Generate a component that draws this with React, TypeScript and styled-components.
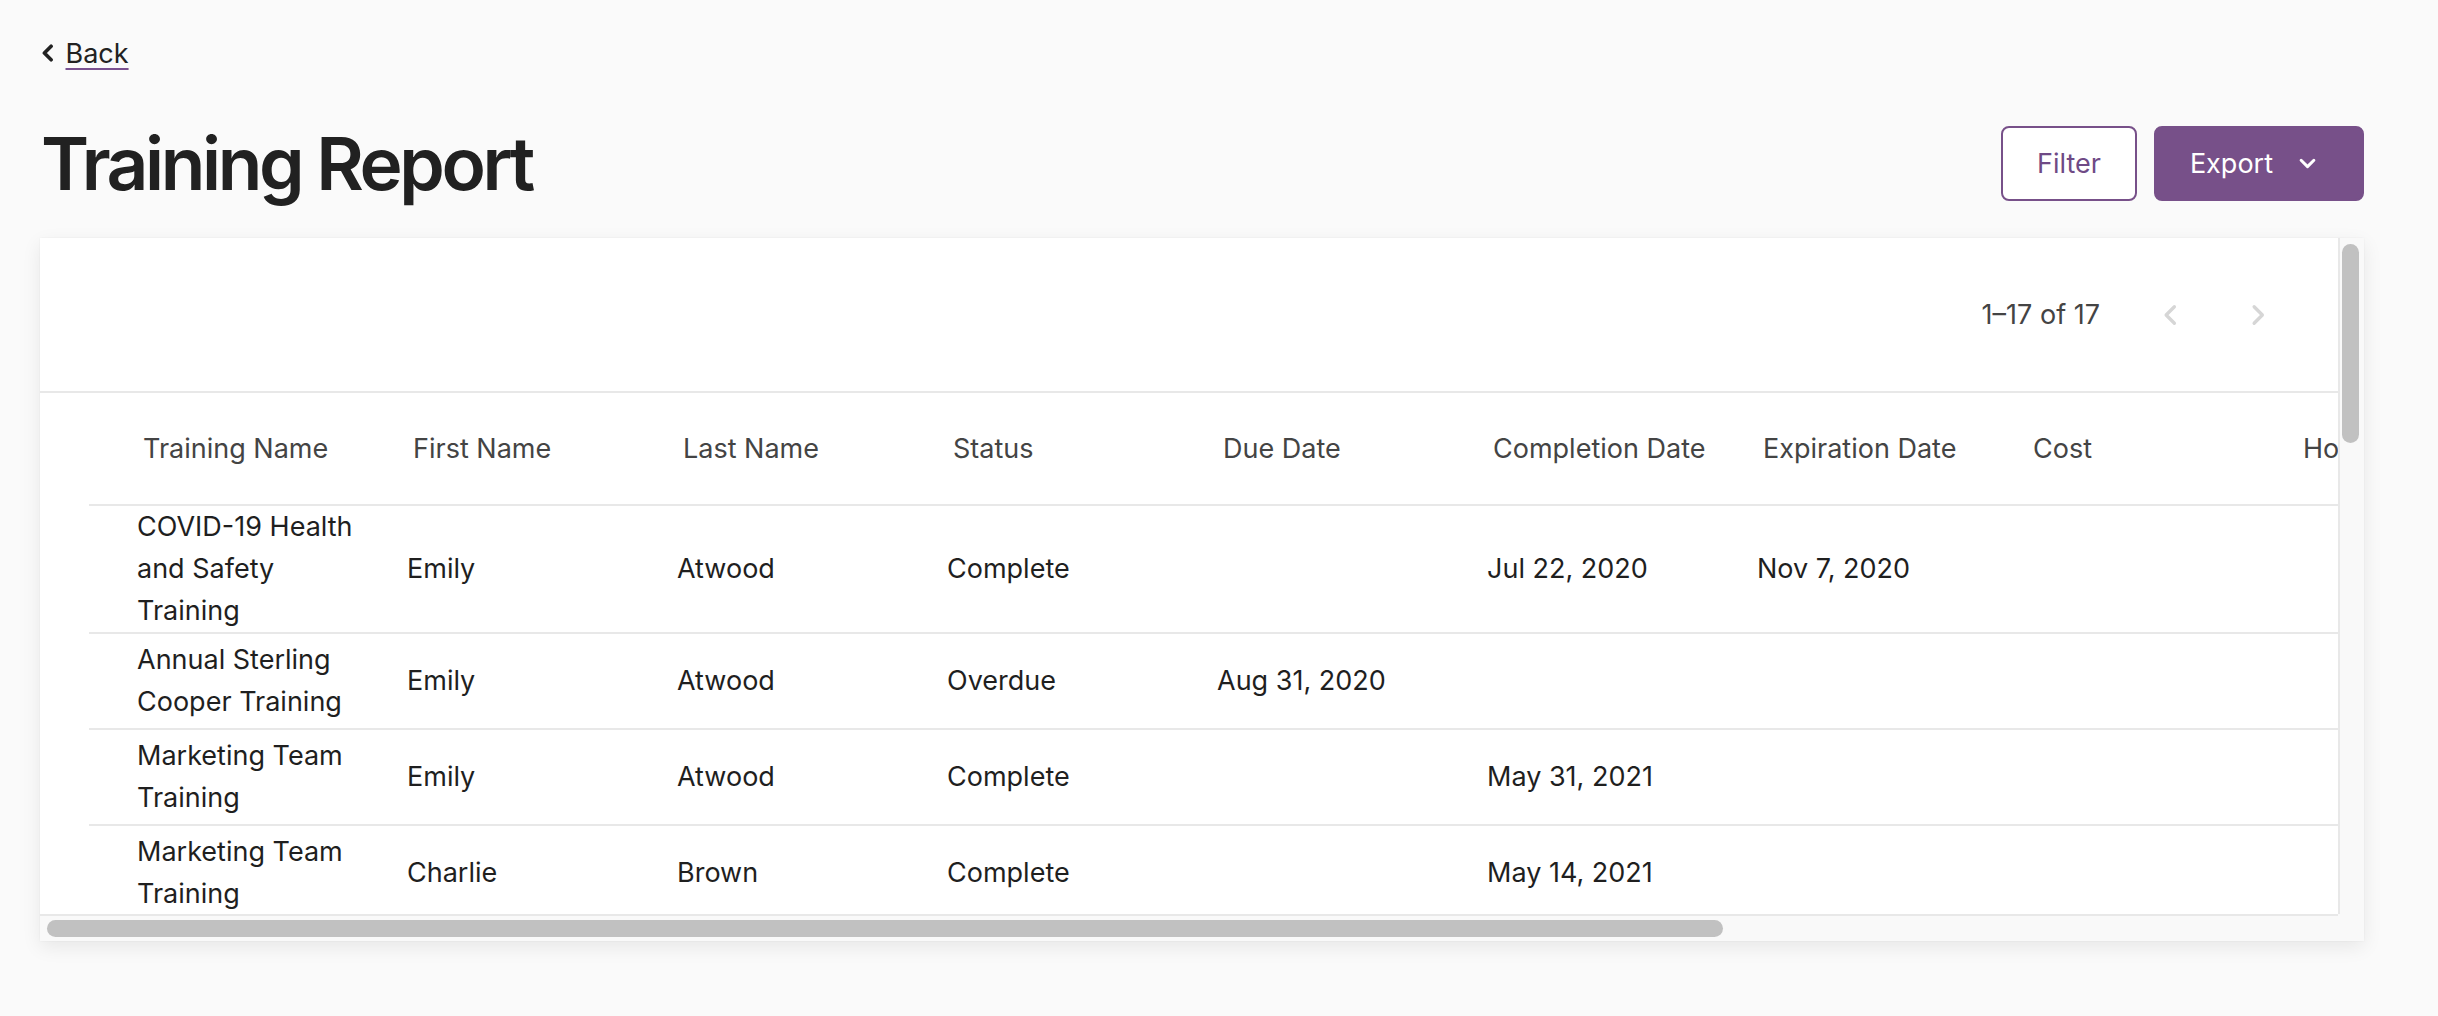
import * as React from 'react'
import styled, { createGlobalStyle } from 'styled-components'

const GlobalStyle = createGlobalStyle`
  body {
    margin: 0;
    background: #fafafa;
    font-family: Inter, "Open Sans", "Liberation Sans", sans-serif;
    color: #1f1f1f;
  }
`

const Page = styled.div`
  padding: 36px 74px 40px 40px;
`
const BackLink = styled.a`
  display: inline-flex;
  align-items: center;
  gap: 11px;
  height: 34px;
  margin-left: 1px;
  color: #222;
  cursor: pointer;
`
const BackText = styled.span`
  font-size: 27px;
  text-decoration: underline;
  text-decoration-color: #7a5190;
  text-decoration-thickness: 2px;
  text-underline-offset: 5px;
`
const Header = styled.div`
  display: flex;
  align-items: center;
  justify-content: space-between;
  height: 75px;
  margin-top: 56px;
`
const Title = styled.h1`
  margin: 0 0 0 1px;
  font-size: 73px;
  font-weight: 600;
  letter-spacing: -3.4px;
  color: #212121;
`
const Actions = styled.div`
  display: flex;
  gap: 17px;
`
const Button = styled.button<{ $primary?: boolean }>`
  display: flex;
  align-items: center;
  gap: 26px;
  height: 75px;
  padding: ${(p) => (p.$primary ? '0 46px 0 34px' : '0 34px')};
  border: 2px solid #775089;
  border-radius: 8px;
  background: ${(p) => (p.$primary ? '#775089' : '#ffffff')};
  color: ${(p) => (p.$primary ? '#ffffff' : '#6f4a86')};
  font-family: inherit;
  font-size: 27px;
  cursor: pointer;
`
const Card = styled.div`
  display: grid;
  grid-template-columns: 1fr 26px;
  grid-template-rows: 676px 27px;
  margin-top: 37px;
  width: 2324px;
  background: #fff;
  box-shadow: 0 6px 18px rgba(0, 0, 0, 0.08), 0 0 2px rgba(0, 0, 0, 0.05);
`
const Viewport = styled.div`
  overflow: hidden;
  min-width: 0;
`
const Track = styled.div<{ $axis: 'x' | 'y' }>`
  display: flex;
  background: #f9f9f9;
  ${(p) => (p.$axis === 'y'
    ? 'border-left: 2px solid #e8e8e8; padding: 6px 0 0 2px;'
    : 'border-top: 2px solid #e8e8e8; padding: 4px 0 0 7px;')}
`
const Thumb = styled.div<{ $axis: 'x' | 'y' }>`
  background: #c1c1c1;
  border-radius: 9px;
  width: ${(p) => (p.$axis === 'y' ? '17px' : '1676px')};
  height: ${(p) => (p.$axis === 'y' ? '199px' : '17px')};
`
const Corner = styled.div`
  background: #f9f9f9;
`
const Pagination = styled.div`
  display: flex;
  align-items: center;
  justify-content: flex-end;
  height: 153px;
  padding-right: 50px;
  border-bottom: 2px solid #e8e8e8;
`
const PageCount = styled.span`
  font-size: 27px;
  color: #444;
  margin-right: 40px;
`
const PageButton = styled.button`
  display: flex;
  align-items: center;
  justify-content: center;
  width: 60px;
  height: 60px;
  padding: 0;
  border: 0;
  background: transparent;
  cursor: default;

  & + & {
    margin-left: 28px;
  }
`
const Table = styled.div`
  width: max-content;
  margin: 0 48px 0 49px;
`
const Row = styled.div<{ $head?: boolean }>`
  display: grid;
  grid-template-columns: repeat(11, 270px);
  align-items: center;
  min-height: ${(p) => (p.$head ? '111px' : '94px')};
  padding-left: 48px;
  border-bottom: 2px solid #e8e8e8;
`
const HeadCell = styled.div`
  padding: 0 30px 0 6px;
  font-size: 27px;
  color: #444;
  white-space: nowrap;
`
const Cell = styled.div`
  padding-right: 30px;
  font-size: 27px;
  line-height: 42px;
  color: #1f1f1f;
`

const columns = [
  'Training Name',
  'First Name',
  'Last Name',
  'Status',
  'Due Date',
  'Completion Date',
  'Expiration Date',
  'Cost',
  'Hours',
]

const rows: string[][] = [
  ['COVID-19 Health and Safety Training', 'Emily', 'Atwood', 'Complete', '', 'Jul 22, 2020', 'Nov 7, 2020'],
  ['Annual Sterling Cooper Training', 'Emily', 'Atwood', 'Overdue', 'Aug 31, 2020', '', ''],
  ['Marketing Team Training', 'Emily', 'Atwood', 'Complete', '', 'May 31, 2021', ''],
  ['Marketing Team Training', 'Charlie', 'Brown', 'Complete', '', 'May 14, 2021', ''],
]

const Chevron = ({ dir, color, size, weight }: { dir: 'left' | 'right' | 'down'; color: string; size: number; weight: number }) => {
  const d = dir === 'left' ? 'M9 2 L3 8 L9 14' : dir === 'right' ? 'M3 2 L9 8 L3 14' : 'M2 4 L8 10 L14 4'
  const box = dir === 'down' ? '0 0 16 14' : '0 0 12 16'
  return (
    <svg width={dir === 'down' ? size : size * 0.75} height={dir === 'down' ? size * 0.875 : size} viewBox={box}>
      <path d={d} fill='none' stroke={color} strokeWidth={weight} strokeLinecap='round' strokeLinejoin='round' />
    </svg>
  )
}

export default function App() {
  return (
    <Page>
      <GlobalStyle />
      <BackLink>
        <Chevron dir='left' color='#222' size={18} weight={3.2} />
        <BackText>Back</BackText>
      </BackLink>

      <Header>
        <Title>Training Report</Title>
        <Actions>
          <Button>Filter</Button>
          <Button $primary>
            Export
            <Chevron dir='down' color='#fff' size={17} weight={2.8} />
          </Button>
        </Actions>
      </Header>

      <Card>
        <Viewport>
          <Pagination>
            <PageCount>1–17 of 17</PageCount>
            <PageButton aria-label='Previous page'>
              <Chevron dir='left' color='#d6d6d6' size={22} weight={2.4} />
            </PageButton>
            <PageButton aria-label='Next page'>
              <Chevron dir='right' color='#d6d6d6' size={22} weight={2.4} />
            </PageButton>
          </Pagination>

          <Table>
            <Row $head>
              {columns.map((c) => <HeadCell key={c}>{c}</HeadCell>)}
            </Row>
            {rows.map((r, i) => (
              <Row key={i}>
                {columns.map((c, j) => <Cell key={c}>{r[j] || ''}</Cell>)}
              </Row>
            ))}
          </Table>
        </Viewport>
        <Track $axis='y'>
          <Thumb $axis='y' />
        </Track>
        <Track $axis='x'>
          <Thumb $axis='x' />
        </Track>
        <Corner />
      </Card>
    </Page>
  )
}
